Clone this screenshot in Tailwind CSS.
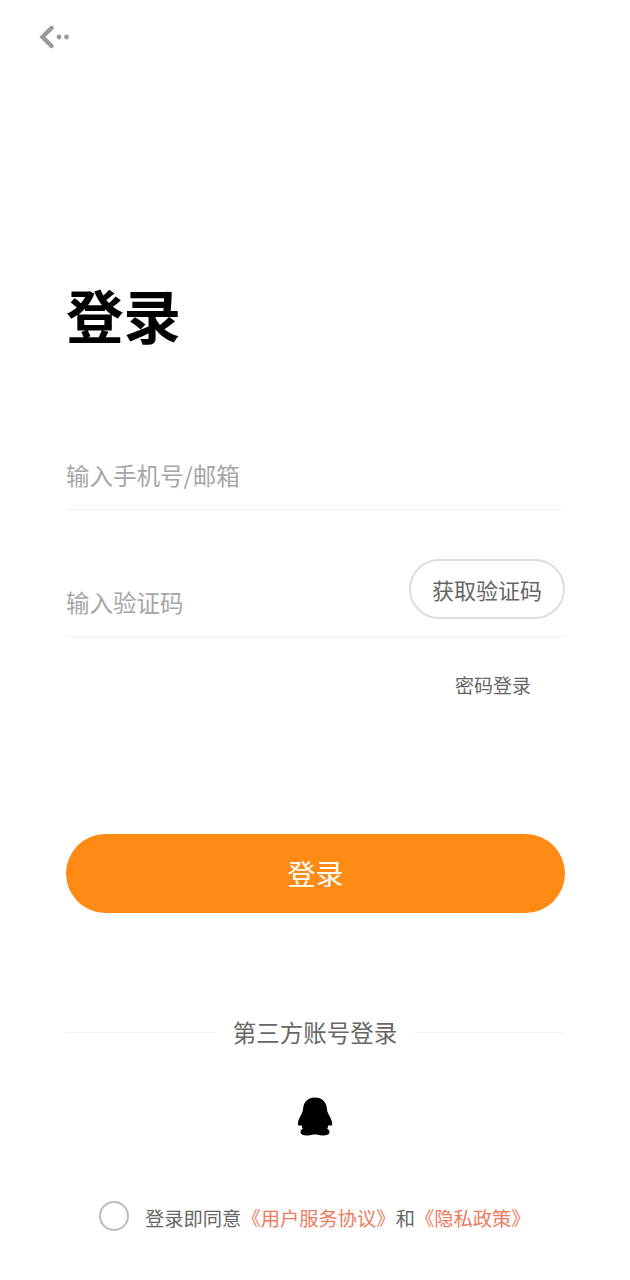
<!DOCTYPE html>
<html lang="zh-CN">
  <head>
    <meta charset="UTF-8" />
    <meta name="viewport" content="width=device-width, initial-scale=1.0" />
    <title>登录</title>
    <script src="https://cdn.jsdelivr.net/npm/@tailwindcss/browser@4"></script>
  </head>
  <body class="h-[1280px] overflow-hidden bg-white font-['Noto_Sans_CJK_SC','Noto_Sans',sans-serif]">
    <!-- back -->
    <div class="h-[284px] pl-[39px] pt-[25px]">
      <svg class="h-[24px] w-[32px]" viewBox="0 0 32 24">
        <path d="M12.5 3 L3.5 12 L12.5 21" fill="none" stroke="#999999" stroke-width="4.5" stroke-linecap="round" stroke-linejoin="miter" />
        <circle cx="20" cy="12" r="2.4" fill="#999999" />
        <circle cx="27.5" cy="12" r="2.4" fill="#999999" />
      </svg>
    </div>

    <main class="pl-[66px] pr-[65px]">
      <h1 class="h-[60px] text-[57.5px] leading-[60px] font-bold text-black">登录</h1>

      <div class="mt-[102px] flex h-[64px] items-center border-b border-[#f2f2f2] pb-[4px] text-[23.5px] text-[#a6a6a6]">
        输入手机号/邮箱
      </div>

      <div class="mt-[50px] flex h-[77px] items-end justify-between border-b border-[#f2f2f2]">
        <span class="mb-[17px] text-[23.5px] leading-[34px] text-[#a6a6a6]">输入验证码</span>
        <button class="mb-[17px] h-[60px] w-[156px] rounded-full border-2 border-[#dddddd] text-[22px] text-[#666666]">获取验证码</button>
      </div>

      <div class="mt-[32px] pr-[34px] text-right text-[19px] leading-[32px] text-[#666666]">密码登录</div>

      <button class="mt-[133px] block h-[79px] w-full rounded-full bg-[#ff8a14] pb-[2px] text-[28px] text-white">登录</button>

      <div class="mt-[102px] flex items-center pr-[1px]">
        <div class="h-px flex-1 bg-[#f2f2f2]"></div>
        <span class="px-[17px] text-[23.5px] leading-[34px] text-[#666666]">第三方账号登录</span>
        <div class="h-px flex-1 bg-[#f2f2f2]"></div>
      </div>

      <div class="mt-[47px] flex justify-center">
        <svg class="-ml-[2px] h-[40px] w-[36px]" viewBox="0 0 36 40">
          <path fill="#000000" d="M18 1.5 C11 1.5 6.8 6 6.2 12 C5.9 15 5.4 16.5 4 19 C2.4 21.8 0.8 25 0.8 27.8 C0.8 29.8 2.6 30.2 4.4 29 C4.8 30.6 5.2 31.8 5.8 32.8 C4 33.8 3.2 35.2 3.6 36.8 C4.2 39.2 8.4 40 12.6 39.2 C14.6 38.8 15.8 38.4 18 38.4 C20.2 38.4 21.4 38.8 23.4 39.2 C27.6 40 31.8 39.2 32.4 36.8 C32.8 35.2 32 33.8 30.2 32.8 C30.8 31.8 31.2 30.6 31.6 29 C33.4 30.2 35.2 29.8 35.2 27.8 C35.2 25 33.6 21.8 32 19 C30.6 16.5 30.1 15 29.8 12 C29.2 6 25 1.5 18 1.5 Z" />
        </svg>
      </div>
    </main>

    <div class="mt-[62px] flex items-center pl-[99px]">
      <span class="h-[30px] w-[30px] rounded-full border-2 border-[#bbbbbb]"></span>
      <p class="ml-[16px] pt-[4px] text-[19.3px] leading-[32px] text-[#666666]">
        登录即同意<span class="text-[#ef7a5e]">《用户服务协议》</span>和<span class="text-[#ef7a5e]">《隐私政策》</span>
      </p>
    </div>
  </body>
</html>
